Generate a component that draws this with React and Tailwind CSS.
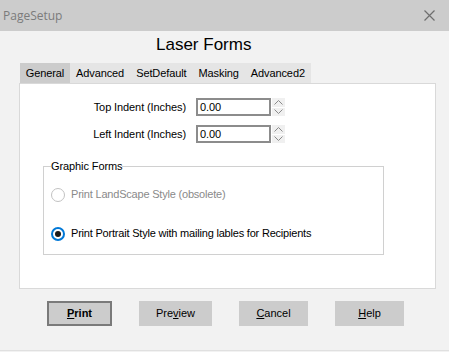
import React from "react";

const font = { fontFamily: '"Liberation Sans", Arial, sans-serif' };

function Spinner() {
  return (
    <div className="flex flex-col w-[13px] h-[18px] ml-[1px] gap-[1px]">
      <div className="flex-1 bg-[#f0f0f0] flex items-center justify-center">
        <svg width="9" height="5" viewBox="0 0 9 5">
          <path d="M0.5 4.5 L4.5 0.5 L8.5 4.5" fill="none" stroke="#8a8a8a" strokeWidth="1" />
        </svg>
      </div>
      <div className="flex-1 bg-[#f0f0f0] flex items-center justify-center">
        <svg width="9" height="5" viewBox="0 0 9 5">
          <path d="M0.5 0.5 L4.5 4.5 L8.5 0.5" fill="none" stroke="#8a8a8a" strokeWidth="1" />
        </svg>
      </div>
    </div>
  );
}

function IndentRow({ label }) {
  return (
    <div className="flex items-center h-[18px]">
      <div className="w-[176px] text-right text-[11px] text-black pr-[10px]">{label}</div>
      <div className="w-[75px] h-[18px] border-2 border-[#8c8c8c] bg-white text-[11px] leading-[14px] px-[2px]">0.00</div>
      <Spinner />
    </div>
  );
}

function Btn({ children, primary, w }) {
  return (
    <div
      className={`h-[25px] ${w} bg-[#cccccc] flex items-center justify-center text-[11px] text-black ${
        primary ? "border-2 border-[#7a7a7a] font-bold" : ""
      }`}
    >
      {children}
    </div>
  );
}

export default function App() {
  const tabs = ["General", "Advanced", "SetDefault", "Masking", "Advanced2"];
  return (
    <div className="w-[449px] h-[352px] bg-[#f2f2f2] flex flex-col overflow-hidden" style={font}>
      {/* title bar */}
      <div className="h-[31px] bg-[#cccccc] flex items-center justify-between pl-[3px] pr-[14px]">
        <span className="text-[12px] text-[#7b7b7b]" style={{ fontFamily: '"Open Sans", "Noto Sans", sans-serif' }}>PageSetup</span>
        <svg width="11" height="11" viewBox="0 0 11 11">
          <path d="M0.5 0.5 L10.5 10.5 M10.5 0.5 L0.5 10.5" stroke="#6e6e6e" strokeWidth="1.2" />
        </svg>
      </div>

      <div className="h-[32px] pl-[156px] pt-[1px]">
        <span className="text-[17px] text-black">Laser Forms</span>
      </div>

      {/* tabs */}
      <div className="flex pl-[20px] h-[20px] items-stretch text-[11px] tracking-[-0.1px]">
        <div className="bg-[#cccccc] w-[50px] flex items-center justify-center text-black">General</div>
        <div className="bg-[#e5e5e5] flex items-stretch text-black">
          {tabs.slice(1).map((t) => (
            <div key={t} className="px-[6px] flex items-center">{t}</div>
          ))}
        </div>
      </div>

      {/* panel */}
      <div className="ml-[19px] w-[417px] h-[206px] bg-white border border-[#d9d9d9] flex flex-col tracking-[-0.1px]">
        <div className="pt-[14px] flex flex-col gap-[9px]">
          <IndentRow label="Top Indent (Inches)" />
          <IndentRow label="Left Indent (Inches)" />
        </div>
        <fieldset className="ml-[23px] mt-[15px] w-[341px] h-[97px] border border-[#d0d0d0] pl-[7px] pr-0">
          <legend className="text-[11px] text-black px-0 ml-0">Graphic Forms</legend>
          <div className="flex items-center mt-[13px] h-[14px]">
            <div className="w-[14px] h-[14px] rounded-full border border-[#c2c2c2] bg-white" />
            <span className="ml-[6px] text-[11px] text-[#8a8a8a] tracking-[-0.2px]">Print LandScape Style (obsolete)</span>
          </div>
          <div className="flex items-center mt-[25px] h-[14px]">
            <div className="w-[14px] h-[14px] rounded-full border-2 border-[#0078d7] bg-white flex items-center justify-center">
              <div className="w-[6px] h-[6px] rounded-full bg-[#1a1a1a]" />
            </div>
            <span className="ml-[6px] text-[11px] text-black tracking-[-0.2px]">Print Portrait Style with mailing lables for Recipients</span>
          </div>
        </fieldset>
      </div>

      {/* buttons */}
      <div className="flex pl-[47px] mt-[12px] gap-[27px]">
        <Btn primary w="w-[65px]"><span><span className="underline">P</span>rint</span></Btn>
        <Btn w="w-[73px]"><span>Pre<span className="underline">v</span>iew</span></Btn>
        <Btn w="w-[69px]"><span><span className="underline">C</span>ancel</span></Btn>
        <Btn w="w-[69px]"><span><span className="underline">H</span>elp</span></Btn>
      </div>

      <div className="flex-1" />
      <div className="h-[2px] border-t border-[#e0e0e0]" />
    </div>
  );
}
